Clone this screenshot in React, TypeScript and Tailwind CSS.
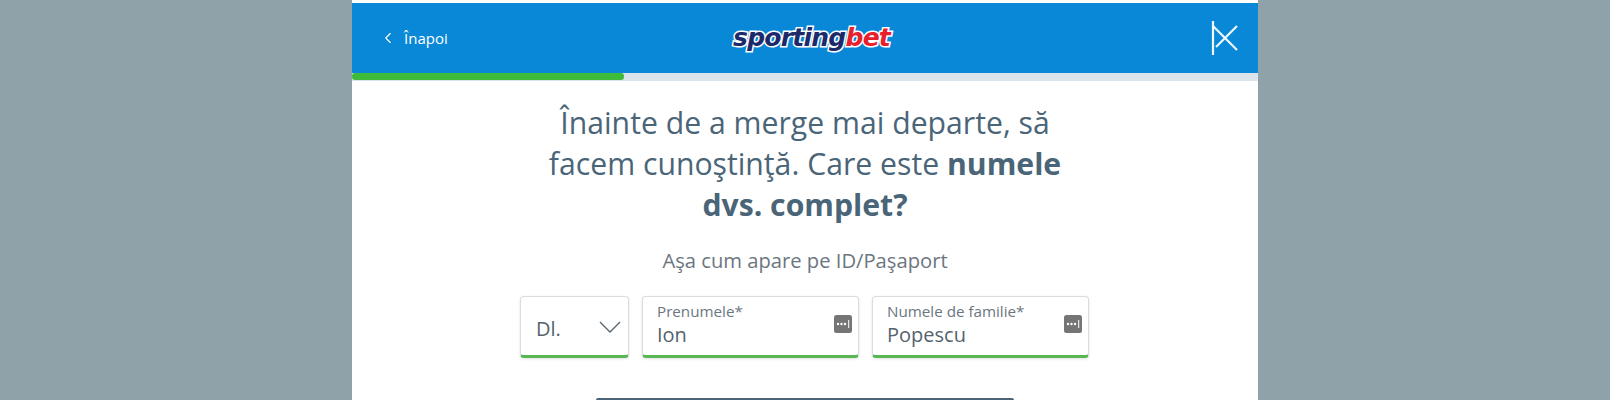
import { ChevronLeft } from "lucide-react"

function PasswordDots() {
  return (
    <svg width="18" height="18" viewBox="0 0 18 18" className="absolute right-[6px] top-[18px]">
      <rect x="0" y="0" width="18" height="18" rx="2.5" fill="#757575" />
      <circle cx="4" cy="9" r="1.2" fill="#fff" />
      <circle cx="7.5" cy="9" r="1.2" fill="#fff" />
      <circle cx="11" cy="9" r="1.2" fill="#fff" />
      <rect x="14.2" y="5" width="1" height="8" fill="#fff" />
    </svg>
  )
}

function Field({ label, value }: { label: string; value: string }) {
  return (
    <div className="relative h-[62px] w-[217px] rounded-[4px] border border-[#dcdcdc] border-b-[3px] border-b-[#58b655] bg-white pl-[14px] pt-[5px] shadow-[0_1px_3px_rgba(0,0,0,0.12)]">
      <div className="text-[15.2px] leading-[19px] text-[#6b7680]">{label}</div>
      <div className="mt-[1px] text-[20px] leading-[26px] text-[#55626c]">{value}</div>
      <PasswordDots />
    </div>
  )
}

export default function App() {
  return (
    <div className="h-[400px] overflow-hidden bg-[#8fa2aa] font-['Open_Sans',sans-serif]">
      <div className="mx-auto h-[400px] w-[906px] bg-white pt-[3px]">
        <div className="relative flex h-[70px] items-center justify-between bg-[#0a88d8] pl-[27px] pr-[19px]">
          <div className="flex items-center gap-[7px] text-[15px] text-white">
            <ChevronLeft size={18} strokeWidth={1.5} />
            <span>Înapoi</span>
          </div>
          <div className="absolute left-[381px] top-[20px] text-[25px] leading-[30px] font-bold italic tracking-[-0.75px] font-['DejaVu_Sans',sans-serif] [-webkit-text-stroke:3px_white] [paint-order:stroke_fill]">
            <span className="text-[#1c2a6b]">sporting</span>
            <span className="text-[#e8202e]">bet</span>
          </div>
          <svg width="28" height="36" viewBox="0 0 28 36" fill="none" stroke="#f2f7fb" strokeWidth="2.2">
            <path d="M2 1V35" />
            <path d="M2 6L26 30" />
            <path d="M26 6L5 27" />
          </svg>
        </div>
        <div className="h-[8px] bg-[#dbe4ea]">
          <div className="h-[7px] w-[272px] rounded-[3px] bg-[#3fbb3a]" />
        </div>
        <div className="mx-auto mt-[21px] w-[540px] text-center text-[30.2px] leading-[41px] text-[#4a6578]">
          Înainte de a merge mai departe, să facem cunoştinţă. Care este <b className="font-bold">numele dvs. complet?</b>
        </div>
        <div className="mt-[22px] text-center text-[20.2px] leading-[26px] text-[#6b7680]">Aşa cum apare pe ID/Paşaport</div>
        <div className="mt-[23px] flex justify-center gap-[13px] pr-[1px]">
          <div className="relative h-[62px] w-[109px] rounded-[4px] border border-[#dcdcdc] border-b-[3px] border-b-[#58b655] bg-white pl-[15px] pt-[17px] text-[20px] leading-[30px] text-[#55626c] shadow-[0_1px_3px_rgba(0,0,0,0.12)]">
            Dl.
            <svg width="22" height="12" viewBox="0 0 22 12" fill="none" stroke="#55626c" strokeWidth="1.3" className="absolute right-[7px] top-[24px]">
              <path d="M1 1L11 11L21 1" />
            </svg>
          </div>
          <Field label="Prenumele*" value="Ion" />
          <Field label="Numele de familie*" value="Popescu" />
        </div>
        <div className="mx-auto mt-[40px] h-[2px] w-[418px] rounded-t-[3px] bg-[#4a6578]" />
      </div>
    </div>
  )
}
